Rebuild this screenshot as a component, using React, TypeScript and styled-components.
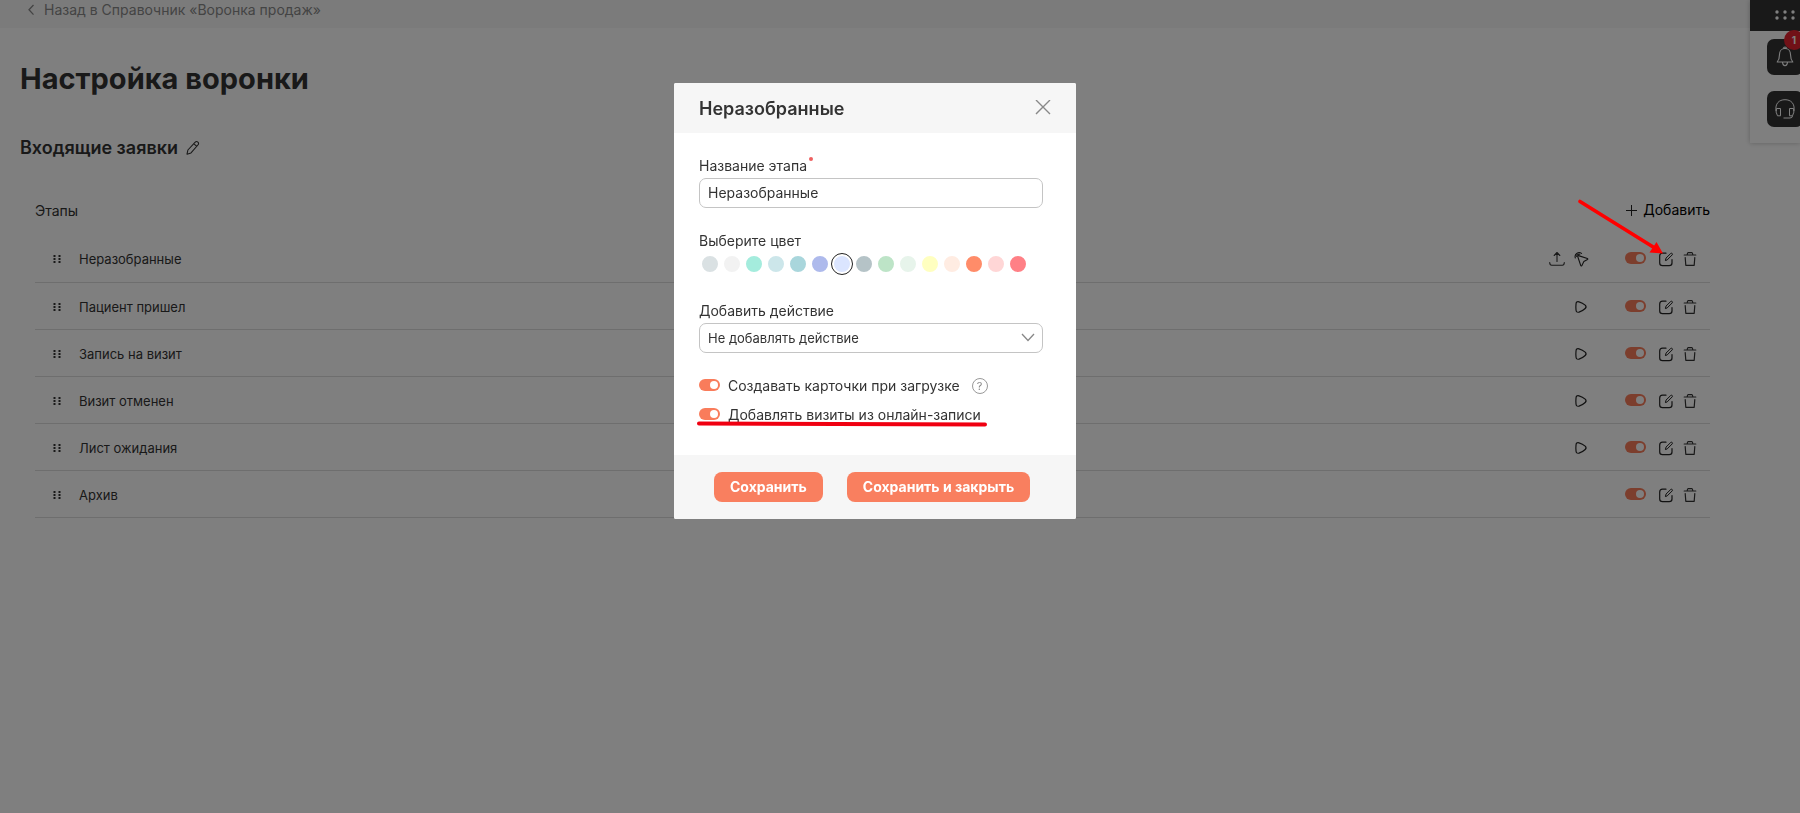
import React from "react";
import styled, { createGlobalStyle } from "styled-components";

const GlobalStyle = createGlobalStyle`
  *, *::before, *::after { box-sizing: border-box; }
  body {
    margin: 0;
    background: #fff;
    color: #333;
    font: 14px/20px Inter, "Liberation Sans", sans-serif;
  }
  button, input, select { font: inherit; color: inherit; }
  button { padding: 0; border: 0; background: none; cursor: pointer; }
  svg { display: block; }
`;

const Page = styled.div`
  display: flex;
  align-items: flex-start;
  min-height: 100vh;
  overflow: hidden;
`;

const Content = styled.div`
  flex: 1;
  min-width: 0;
`;

const TopBar = styled.nav`
  display: flex;
  height: 28px;
  padding: 0 26px;
  background: #f7f7f7;
`;

const BackLink = styled.a`
  display: flex;
  align-items: center;
  gap: 8px;
  height: 20px;
  color: #888;
  text-decoration: none;
`;

const Main = styled.main`
  padding: 32px 40px 40px 20px;
`;

const PageTitle = styled.h1`
  margin: 0;
  font-size: 29px;
  line-height: 38px;
  font-weight: 700;
`;

const SectionHead = styled.div`
  display: flex;
  align-items: center;
  gap: 7px;
  margin-top: 38px;
`;

const SectionTitle = styled.h2`
  margin: 0;
  font-size: 18px;
  line-height: 24px;
  font-weight: 600;
`;

const StageTable = styled.table`
  width: calc(100% - 15px);
  margin: 36px 0 0 15px;
  border-collapse: collapse;
`;

const HeadCell = styled.th<{ $end?: boolean }>`
  height: 39px;
  padding: 0 0 10px;
  font-weight: 400;
  text-align: ${(p) => (p.$end ? "right" : "left")};
`;

const AddButton = styled.button`
  display: inline-flex;
  align-items: center;
  gap: 6px;
  color: #000;
`;

const StageRow = styled.tr`
  height: 47px;
  border-bottom: 1px solid #dcdcdc;
`;

const Cell = styled.td`
  padding: 2px 0 0;
`;

const StageName = styled.div`
  display: flex;
  align-items: center;
  gap: 16px;
  padding-left: 16px;
  font-size: 13px;
`;

const Actions = styled.div`
  display: flex;
  align-items: center;
  justify-content: flex-end;
  gap: 8px;
  padding-right: 12px;
`;

const Triggers = styled.div`
  display: flex;
  gap: 8px;
  margin-right: 28px;
`;

const IconButton = styled.button`
  display: flex;
  align-items: center;
  justify-content: center;
  width: 16px;
  height: 18px;
`;

const Switch = styled.input`
  appearance: none;
  flex: none;
  width: 21px;
  height: 12px;
  margin: 0 4px 2px 0;
  padding: 2px;
  border-radius: 6px;
  background: #f97c5b;
  cursor: pointer;

  &::before {
    content: "";
    display: block;
    width: 8px;
    height: 8px;
    margin-left: 9px;
    border-radius: 50%;
    background: #fff;
  }
`;

const Side = styled.aside`
  flex: none;
  width: 50px;
  height: 143px;
  background: #fff;
  box-shadow: 0 0 5px rgba(0, 0, 0, 0.25);
`;

const AppsButton = styled.button`
  display: flex;
  align-items: center;
  width: 50px;
  height: 31px;
  padding: 0 0 2px 24px;
  background: #333;
`;

const SideList = styled.div`
  display: grid;
  gap: 16px;
  padding: 8px 0 0 17px;
`;

const SideButton = styled.button`
  position: relative;
  display: flex;
  align-items: center;
  justify-content: center;
  width: 36px;
  height: 36px;
  border-radius: 7px;
  background: #333;
`;

const Badge = styled.span`
  position: absolute;
  top: -9px;
  left: 17px;
  width: 20px;
  height: 20px;
  border-radius: 50%;
  background: #e3222f;
  color: #fff;
  font-size: 10px;
  font-weight: 700;
  text-align: center;
`;

const Overlay = styled.div`
  position: fixed;
  inset: 0;
  display: flex;
  align-items: flex-start;
  justify-content: center;
  padding: 83px 50px 0 0;
  background: rgba(0, 0, 0, 0.5);
`;

const Dialog = styled.form`
  width: 402px;
  border-radius: 2px;
  overflow: hidden;
  background: #fff;
`;

const DialogHead = styled.header`
  display: flex;
  align-items: center;
  justify-content: space-between;
  height: 50px;
  padding: 2px 25px 0;
  background: #f6f6f6;
`;

const DialogTitle = styled.h2`
  margin: 0;
  font-size: 18px;
  line-height: 24px;
  font-weight: 600;
`;

const DialogBody = styled.div`
  display: grid;
  gap: 23px;
  padding: 23px 33px 30px 25px;
`;

const Field = styled.div`
  display: grid;
  gap: 2px;
`;

const Label = styled.label`
  display: flex;
  line-height: 20px;
`;

const Required = styled.span`
  width: 4px;
  height: 4px;
  margin: 1px 0 0 2px;
  border-radius: 50%;
  background: #ee6060;
`;

const TextInput = styled.input`
  width: 100%;
  height: 30px;
  padding: 0 8px 2px;
  border: 1px solid #c4c4c4;
  border-radius: 7px;
  background: #fff;
  outline: 0;
`;

const SelectBox = styled.div`
  position: relative;

  svg {
    position: absolute;
    top: 10px;
    right: 8px;
    pointer-events: none;
  }
`;

const Select = styled.select`
  appearance: none;
  width: 100%;
  height: 30px;
  padding: 0 28px 0 8px;
  border: 1px solid #c4c4c4;
  border-radius: 7px;
  background: #fff;
  font-size: 13px;
`;

const Palette = styled.div`
  display: flex;
  width: 330px;
  padding-bottom: 3px;
`;

const Swatch = styled.input<{ $color: string }>`
  appearance: none;
  width: 22px;
  height: 22px;
  margin: 0;
  border: 3px solid #fff;
  border-radius: 50%;
  background: ${(p) => p.$color};
  cursor: pointer;

  &:checked {
    outline: 1px solid #222;
    outline-offset: -1px;
  }
`;

const Options = styled.div`
  display: grid;
  gap: 9px;
`;

const Option = styled.div`
  position: relative;
  display: flex;
  align-items: center;
  gap: 4px;
  height: 20px;
`;

const Help = styled.button`
  width: 16px;
  height: 16px;
  margin-left: 8px;
  border: 1px solid #999;
  border-radius: 50%;
  color: #888;
  font-size: 11px;
  line-height: 14px;
`;

const Underline = styled.svg`
  position: absolute;
  top: 15px;
  left: -4px;
  pointer-events: none;
`;

const DialogFoot = styled.footer`
  display: flex;
  gap: 24px;
  padding: 17px 40px;
  background: #f6f6f6;
`;

const Save = styled.button`
  height: 30px;
  padding: 0 16px;
  border-radius: 8px;
  background: #f97f5f;
  color: #fff;
  font-weight: 700;
`;

const Pointer = styled.svg`
  position: absolute;
  top: 197px;
  right: 134px;
  pointer-events: none;
`;

const Grip = () => (
  <svg width="12" height="12" viewBox="0 0 12 12" fill="#333">
    {[2, 7].map((x) => [2, 5, 8].map((y) => <rect key={`${x}${y}`} x={x + 0.5} y={y} width="2" height="2" />))}
  </svg>
);

const Pencil = () => (
  <svg width="16" height="16" viewBox="0 0 16 16" fill="none" stroke="#333" strokeWidth="1.1" strokeLinejoin="round">
    <path d="M2 14.2l.9-4.2L10 2.3c1-1 2.1-.9 2.9-.2.9.8.9 1.900 0 2.900L6 12.900zM8.800 3.700l2.900 2.600" />
  </svg>
);

const Edit = () => (
  <svg width="16" height="16" viewBox="0 0 16 16" fill="none" stroke="#222" strokeWidth="1.2" strokeLinecap="round" strokeLinejoin="round">
    <path d="M8 2.200H4.500Q1.700 2.200 1.700 5v7q0 2.600 2.800 2.600h6.700q2.800 0 2.800-2.600V8.500" />
    <path strokeWidth="1" d="M7.500 9.200l.5-2.100 4.700-4.600c1-.9 2.400.4 1.500 1.400L9.500 8.600z" />
  </svg>
);

const Trash = () => (
  <svg width="14" height="16" viewBox="0 0 14 16" fill="none" stroke="#333" strokeWidth="1.2" strokeLinecap="round" strokeLinejoin="round">
    <path d="M1.200 4h11.600M4.200 3.800Q4.300 1.700 5.200 1.700h3.600q.9 0 1 2.100M2.200 6.500l.6 7.800h8.400l.6-7.800" />
  </svg>
);

const Upload = () => (
  <svg width="16" height="16" viewBox="0 0 16 16" fill="none" stroke="#333" strokeWidth="1.1" strokeLinecap="round" strokeLinejoin="round">
    <path d="M.7 11.500q.1 2.800 2 2.800h10.600q1.900 0 2-2.800M8 10.500V1.700M5.200 4.500L8 1.500l2.800 3" />
  </svg>
);

const Click = () => (
  <svg width="18" height="18" viewBox="0 0 18 18" fill="none" stroke="#222" strokeWidth="1.2" strokeLinecap="round" strokeLinejoin="round">
    <path d="M6.200 5.200l10 3.200q1 .6.100 1.200l-4.100 2.300-2.300 4.600q-.7.800-1.200-.2L5.300 6.200q-.1-1.100.9-1z" />
    <path d="M2.600 7.900A4.600 4.600 0 0 1 9.600 2.700M4 6.200A3 3 0 0 1 7.700 3.600" />
  </svg>
);

const Play = () => (
  <svg width="14" height="14" viewBox="0 0 14 14" fill="none" stroke="#222" strokeWidth="1.200" strokeLinejoin="round">
    <path d="M2 4.200Q2 1.100 5 1.800q3.600 1 6.200 3.300 1.700 1.700 0 3.400Q8.600 11 5 12.100 2 12.800 2 9.800q-.3-2.700 0-5.600z" />
  </svg>
);

const stages = [
  { name: "Неразобранные", trigger: "click" },
  { name: "Пациент пришел", trigger: "play" },
  { name: "Запись на визит", trigger: "play" },
  { name: "Визит отменен", trigger: "play" },
  { name: "Лист ожидания", trigger: "play" },
  { name: "Архив", trigger: "" },
];

const colors = [
  "#dae1e3", "#f2f2f2", "#a4ecdd", "#cce6ea", "#a9d6dc", "#aebaec", "#dbe5ff", "#b5c3c7",
  "#bde4c7", "#e7f4eb", "#ffffc0", "#ffece2", "#ff8c69", "#ffd6d6", "#ff8086",
];

export default function App() {
  return (
    <>
      <GlobalStyle />
      <Page>
        <Content>
          <TopBar>
            <BackLink href="#">
              <svg width="10" height="12" viewBox="0 0 10 12" fill="none" stroke="#888" strokeWidth="1.300">
                <path d="M7.500 1L3 5.800l4.500 4.800" />
              </svg>
              Назад в Справочник «Воронка продаж»
            </BackLink>
          </TopBar>
          <Main>
            <PageTitle>Настройка воронки</PageTitle>
            <SectionHead>
              <SectionTitle>Входящие заявки</SectionTitle>
              <IconButton type="button" aria-label="Переименовать"><Pencil /></IconButton>
            </SectionHead>
            <StageTable>
              <thead>
                <tr>
                  <HeadCell scope="col">Этапы</HeadCell>
                  <HeadCell $end>
                    <AddButton type="button">
                      <svg width="11" height="11" viewBox="0 0 11 11" stroke="#222"><path d="M5.500 0v11M0 5.500h11" /></svg>
                      Добавить
                    </AddButton>
                  </HeadCell>
                </tr>
              </thead>
              <tbody>
                {stages.map((s) => (
                  <StageRow key={s.name}>
                    <Cell><StageName><Grip />{s.name}</StageName></Cell>
                    <Cell>
                      <Actions>
                        <Triggers>
                          {s.trigger === "click" && <IconButton type="button" aria-label="Загрузить"><Upload /></IconButton>}
                          {s.trigger && (
                            <IconButton type="button" aria-label="Действие">
                              {s.trigger === "click" ? <Click /> : <Play />}
                            </IconButton>
                          )}
                        </Triggers>
                        <Switch type="checkbox" role="switch" defaultChecked aria-label={s.name} />
                        <IconButton type="button" aria-label="Изменить"><Edit /></IconButton>
                        <IconButton type="button" aria-label="Удалить"><Trash /></IconButton>
                      </Actions>
                    </Cell>
                  </StageRow>
                ))}
              </tbody>
            </StageTable>
          </Main>
        </Content>
        <Side>
          <AppsButton type="button" aria-label="Меню">
            <svg width="24" height="12" viewBox="0 0 24 12" fill="#fff">
              {[3, 11, 19].map((x) => [3, 9].map((y) => <circle key={`${x}-${y}`} cx={x} cy={y} r="1.700" />))}
            </svg>
          </AppsButton>
          <SideList>
            <SideButton type="button" aria-label="Уведомления">
              <svg width="20" height="22" viewBox="0 0 20 22" fill="none" stroke="#fff" strokeWidth="1.100" strokeLinejoin="round">
                <path d="M10 2.500c3.500 0 5.500 2.700 5.500 6 0 3.800.7 5.500 2.300 7.500H2.200c1.600-2 2.300-3.700 2.300-7.500 0-3.300 2-6 5.500-6zM8.800 2.300V1.500q1.200-1 2.400 0v.8M7.500 16.200q.3 3.500 2.500 3.500t2.500-3.500" />
              </svg>
              <Badge>1</Badge>
            </SideButton>
            <SideButton type="button" aria-label="Поддержка">
              <svg width="20" height="20" viewBox="0 0 20 20" fill="none" stroke="#fff" strokeWidth="1" strokeLinejoin="round">
                <path d="M1 12C0 4.500 4 .7 10 .7S20 4.500 19 12M1.500 9.500h4v7.300h-3Q.2 13 1.500 9.500zM18.500 9.500h-4v7.300h3q2.300-3.800 1-7.300zM17.500 16.800q0 2.200-2.500 2.200H8.500" />
              </svg>
            </SideButton>
          </SideList>
        </Side>
      </Page>

      <Overlay>
        <Dialog role="dialog" aria-labelledby="stage-title">
          <DialogHead>
            <DialogTitle id="stage-title">Неразобранные</DialogTitle>
            <IconButton type="button" aria-label="Закрыть">
              <svg width="16" height="18" viewBox="0 0 16 18" stroke="#888" strokeWidth="1.400"><path d="M1 0l14 14M15 0l-14 14" /></svg>
            </IconButton>
          </DialogHead>
          <DialogBody>
            <Field>
              <Label htmlFor="stage-name">Название этапа<Required /></Label>
              <TextInput id="stage-name" defaultValue="Неразобранные" />
            </Field>
            <Field>
              <Label as="span" id="stage-color">Выберите цвет</Label>
              <Palette role="radiogroup" aria-labelledby="stage-color">
                {colors.map((c, i) => (
                  <Swatch key={c} type="radio" name="color" aria-label={c} $color={c} defaultChecked={i === 6} />
                ))}
              </Palette>
            </Field>
            <Field>
              <Label htmlFor="stage-action">Добавить действие</Label>
              <SelectBox>
                <Select id="stage-action"><option>Не добавлять действие</option></Select>
                <svg width="14" height="10" viewBox="0 0 14 10" fill="none" stroke="#888" strokeWidth="1.300"><path d="M1 1l6 6.500L13 1" /></svg>
              </SelectBox>
            </Field>
            <Options>
              <Option>
                <Switch type="checkbox" role="switch" id="opt-cards" defaultChecked />
                <label htmlFor="opt-cards">Создавать карточки при загрузке</label>
                <Help type="button" aria-label="Справка">?</Help>
              </Option>
              <Option>
                <Switch type="checkbox" role="switch" id="opt-online" defaultChecked />
                <label htmlFor="opt-online">Добавлять визиты из онлайн-записи</label>
                <Underline width="294" height="8" viewBox="0 0 294 8">
                  <path d="M4 3.500L290 4.500" stroke="#f00011" strokeWidth="4" strokeLinecap="round" />
                </Underline>
              </Option>
            </Options>
          </DialogBody>
          <DialogFoot>
            <Save type="button">Сохранить</Save>
            <Save type="button">Сохранить и закрыть</Save>
          </DialogFoot>
        </Dialog>
        <Pointer width="90" height="60" viewBox="0 0 90 60">
          <path d="M4 4.500l74 46" stroke="#f00" strokeWidth="3.700" strokeLinecap="round" />
          <path d="M87 56.500L73.500 55.500L80.500 45z" fill="#f00" />
        </Pointer>
      </Overlay>
    </>
  );
}
